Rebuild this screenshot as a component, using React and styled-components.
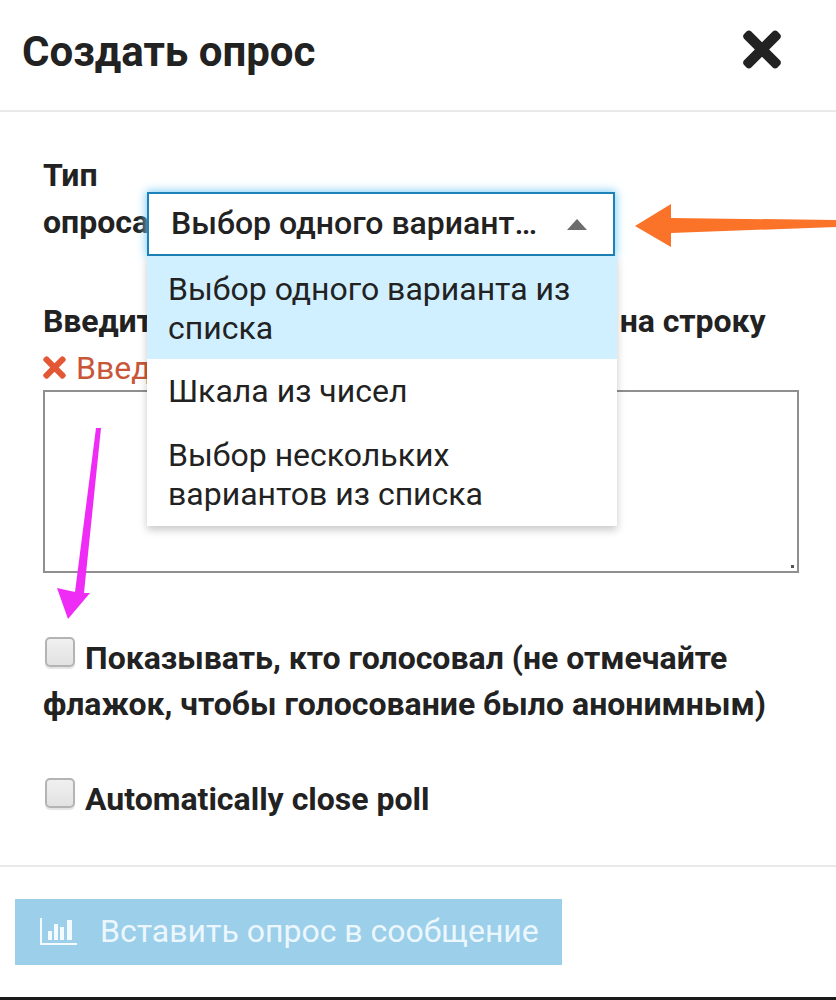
import React from 'react';
import styled, { createGlobalStyle } from 'styled-components';
import { FaTimes } from 'react-icons/fa';

const GlobalStyle = createGlobalStyle`
  html, body {
    margin: 0;
    padding: 0;
    background: #fff;
  }
  * {
    box-sizing: border-box;
  }
`;

const Modal = styled.div`
  position: relative;
  width: 836px;
  height: 1000px;
  overflow: hidden;
  display: flex;
  flex-direction: column;
  background: #fff;
  color: #222;
  font-family: Roboto, "Noto Sans", sans-serif;
`;

const Header = styled.header`
  height: 112px;
  flex: none;
  display: flex;
  align-items: center;
  justify-content: space-between;
  padding: 0 55px 6px 22px;
  border-bottom: 2px solid #e9e9e9;
`;

const Title = styled.h2`
  margin: 0;
  font-size: 42px;
  font-weight: 700;
  line-height: 44px;
`;

const CloseIcon = styled(FaTimes)`
  width: 38px;
  height: 55px;
  margin-top: -5px;
  color: #222;
`;

const Body = styled.div`
  flex: 1;
  padding: 40px 37px 0 43px;
`;

const TypeRow = styled.div`
  display: flex;
  align-items: flex-start;
  height: 146px;
`;

const TypeLabel = styled.label`
  width: 104px;
  flex: none;
  font-size: 32px;
  font-weight: 700;
  line-height: 47px;
`;

const SelectWrap = styled.div`
  position: relative;
  width: 468px;
  margin-top: 40px;
`;

const SelectBox = styled.div`
  height: 64px;
  display: flex;
  align-items: center;
  justify-content: space-between;
  padding: 0 26px 3px 22px;
  border: 2px solid #1d82b8;
  background: #fff;
  box-shadow: 0 0 9px 1px #7fcdf4;
  font-size: 32px;
  font-weight: 500;
  white-space: nowrap;
`;

const Caret = styled.span`
  width: 0;
  height: 0;
  margin-top: 3px;
  border-left: 10px solid transparent;
  border-right: 10px solid transparent;
  border-bottom: 11px solid #6d6d6d;
`;

const Dropdown = styled.ul`
  position: absolute;
  z-index: 2;
  top: 64px;
  left: 0;
  width: 470px;
  margin: 0;
  padding: 0;
  list-style: none;
  background: #fff;
  box-shadow: 0 4px 8px rgba(0, 0, 0, 0.22);
`;

const Option = styled.li`
  padding: ${({ $selected }) => ($selected ? '14px 21px 11px' : '13px 21px 12px')};
  background: ${({ $selected }) => ($selected ? '#d1f0ff' : '#fff')};
  font-size: 32px;
  line-height: 39px;
`;

const OptionsLabel = styled.div`
  font-size: 32px;
  font-weight: 700;
  line-height: 47px;
  letter-spacing: -0.07px;
  white-space: nowrap;
`;

const ErrorLine = styled.div`
  display: flex;
  align-items: center;
  gap: 10px;
  height: 45px;
  color: #c8573a;
  font-size: 32px;
  white-space: nowrap;
`;

const ErrorIcon = styled(FaTimes)`
  width: 23px;
  height: 33px;
  color: #e45735;
`;

const OptionsInput = styled.div`
  width: 756px;
  height: 183px;
  position: relative;
  border: 2px solid #8f8f8f;
`;

const ResizeDot = styled.span`
  position: absolute;
  right: 3px;
  bottom: 3px;
  width: 3px;
  height: 3px;
  background: #555;
`;

const CheckRow = styled.label`
  display: block;
  margin-top: ${({ $gap }) => $gap}px;
  font-size: 32px;
  font-weight: 700;
  line-height: 46px;
`;

const Check = styled.input.attrs({ type: 'checkbox' })`
  appearance: none;
  display: inline-block;
  width: 30px;
  height: 30px;
  margin: 0 10px 0 2px;
  vertical-align: 2px;
  border: 2px solid #b4b4b4;
  border-radius: 5px;
  background: linear-gradient(#f0f0f0, #e2e2e2);
  box-shadow: 0 2px 1px #e4e4e4;
`;

const Footer = styled.footer`
  flex: none;
  height: 135px;
  padding: 32px 0 0 15px;
  border-top: 2px solid #e9e9e9;
  border-bottom: 3px solid #1a1a1a;
`;

const InsertButton = styled.button`
  width: 547px;
  height: 66px;
  display: flex;
  align-items: center;
  gap: 23px;
  padding: 0 0 2px 25px;
  border: 0;
  background: #9ccfea;
  color: #ecf7fd;
  font-family: inherit;
  font-size: 32px;
`;

const Arrow = styled.svg`
  position: absolute;
  z-index: 3;
  left: 0;
  top: 0;
  pointer-events: none;
`;

const ChartIcon = () => (
  <svg width="37" height="27" viewBox="0 0 37 27" fill="#f4fbff">
    <path d="M0 0h2v25h35v2H0z" />
    <path d="M8 13h4v9H8zM14 6h4v16h-4zM20 9h4v13h-4zM27 2h5v20h-5z" />
  </svg>
);

export default function App() {
  return (
    <Modal>
      <GlobalStyle />
      <Header>
        <Title>Создать опрос</Title>
        <CloseIcon />
      </Header>
      <Body>
        <TypeRow>
          <TypeLabel>Тип опроса</TypeLabel>
          <SelectWrap>
            <SelectBox>
              Выбор одного вариант…
              <Caret />
            </SelectBox>
            <Dropdown>
              <Option $selected>Выбор одного варианта из списка</Option>
              <Option>Шкала из чисел</Option>
              <Option>Выбор нескольких вариантов из списка</Option>
            </Dropdown>
          </SelectWrap>
        </TypeRow>
        <OptionsLabel>Введите варианты опроса, по одному на строку</OptionsLabel>
        <ErrorLine>
          <ErrorIcon />
          Введите хотя бы 2 варианта
        </ErrorLine>
        <OptionsInput>
          <ResizeDot />
        </OptionsInput>
        <CheckRow $gap={62}>
          <Check />
          Показывать, кто голосовал (не отмечайте флажок, чтобы голосование было анонимным)
        </CheckRow>
        <CheckRow $gap={49}>
          <Check />
          Automatically close poll
        </CheckRow>
      </Body>
      <Footer>
        <InsertButton>
          <ChartIcon />
          Вставить опрос в сообщение
        </InsertButton>
      </Footer>
      <Arrow width="836" height="1000" viewBox="0 0 836 1000">
        <polygon fill="#fb7229" points="635,226 671,204 671,218 836,220 836,227 671,233 671,247" />
        <polygon fill="#ee2cf5" points="96,428 101,428 84,593 90,593 68,619 57,588 75,592" />
      </Arrow>
    </Modal>
  );
}
